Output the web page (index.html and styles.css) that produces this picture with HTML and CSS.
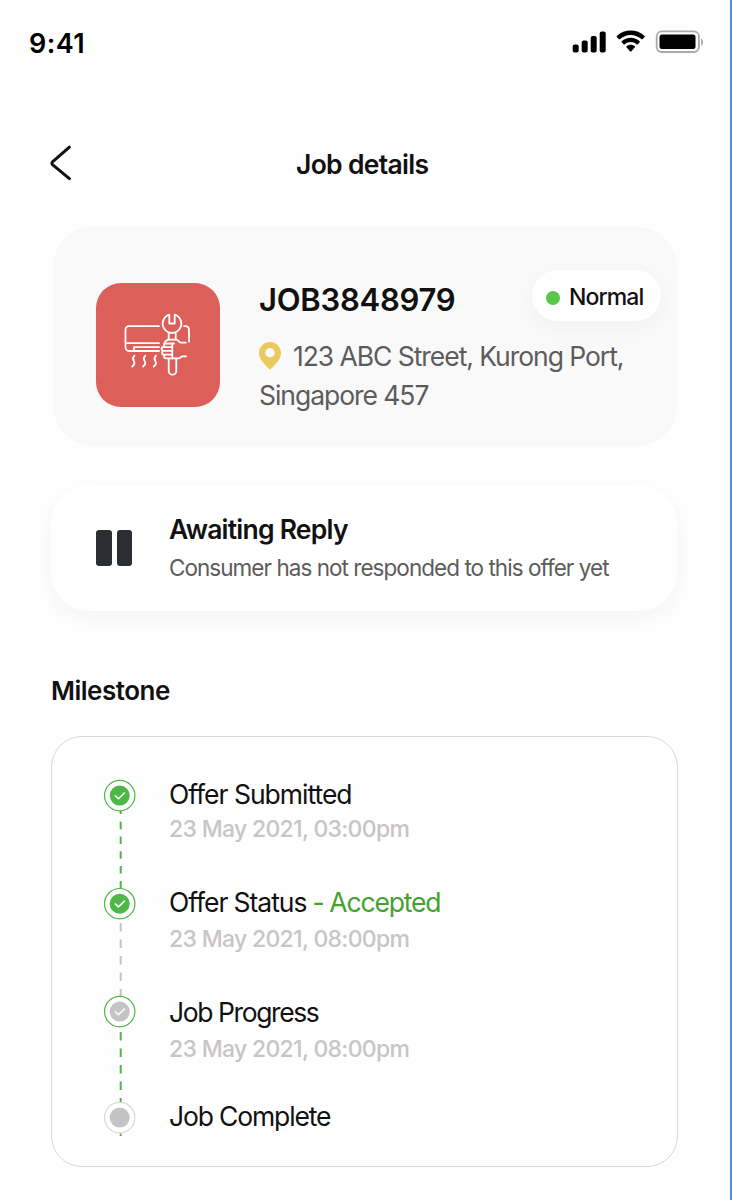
FILE: index.html
```html
<!DOCTYPE html>
<html lang="en">
<head>
<meta charset="utf-8">
<title>Job details</title>
<link rel="stylesheet" href="styles.css">
</head>
<body>
<main class="screen">
  <div class="status-bar">
    <span class="clock">9:41</span>
    <svg class="status-icons" width="134" height="26" viewBox="0.3 0.600 134 26">
      <rect x="1" y="15" width="6" height="8" rx="2"/>
      <rect x="10" y="11" width="6" height="12" rx="2"/>
      <rect x="19" y="6.500" width="6" height="16.500" rx="2"/>
      <rect x="28" y="2" width="6" height="21" rx="2"/>
      <path d="M59 4.700c4.200 0 8 1.600 10.900 4.300.3.200.7.200.9 0l2.100-2.100c.3-.3.300-.7 0-1C65-1.400 53-1.400 45.100 5.900c-.3.300-.3.700 0 1L47.200 9c.2.200.6.200.9 0C51 6.300 54.800 4.700 59 4.700z" transform="translate(0 .8)"/>
      <path d="M59 12.400c2.200 0 4.300.8 6 2.300.3.200.7.200.9 0l2.100-2.100c.3-.3.300-.7 0-1-5-4.700-13-4.700-18 0-.3.300-.3.700 0 1l2.100 2.100c.2.200.6.200.9 0 1.700-1.500 3.800-2.300 6-2.300z" transform="translate(0 .3)"/>
      <path d="M63.200 17.800c.3-.3.300-.7 0-1-2.400-2-6-2-8.400 0-.3.300-.3.700 0 1l3.700 4.400c.3.200.7.200 1 0z"/>
      <rect class="battery-case" x="85" y="1.900" width="42.200" height="20.700" rx="5"/>
      <rect x="87.800" y="5" width="36" height="14.700" rx="2.500"/>
      <path class="battery-cap" d="M129.300 9v7c2.800-1.200 2.800-5.800 0-7z"/>
    </svg>
  </div>

  <header class="header">
    <svg class="back" width="24" height="38" viewBox="0 0 24 38"><path d="M20.400 2.200 3.800 16.500q-1.800 1.700 0 3.400L20.400 33.600"/></svg>
    <h1 class="title">Job details</h1>
  </header>

  <section class="job-card">
    <svg class="job-icon" width="124" height="124" viewBox="0 0 124 124">
      <path d="M63 43.100H33a3.500 3.500 0 0 0-3.500 3.500V64.500a3.500 3.500 0 0 0 3.500 3.500h30M30 60.200h33M63 64.200H38V68M88 43.100h1.500a3.500 3.500 0 0 1 3.500 3.500v12.100"/>
      <path d="M38.500 72.700c-4.500 4 2 5.500-.5 9l-1.800 2M49.300 72.700c-4.500 4 2 5.500-.5 9l-1.800 2M60 72.700c-4.500 4 2 5.500-.5 9l-1.800 2"/>
      <path d="M73.300 31.700v8.800h5.400v-8.800a9.300 9.300 0 1 1-5.400 0zM72.700 49.500v7M79.700 49.500v7M72.700 75.700v12.200a3.800 3.800 0 0 0 7.600 0V75.700"/>
      <path d="M68 61c1-2.500 3-4.300 5.500-4.300h6.800c2.200 0 2.400 3 4.700 3h4.700M76.300 75.400h6c2.500 0 2-2 4.500-2H90M76.300 60.700v14.700"/>
      <path d="M78 60.500H70a1.800 1.800 0 0 0-.5 3.600h6.800M70 64h-2.500a1.900 1.900 0 0 0 0 3.800h8.800M68 67.800a1.900 1.900 0 0 0 0 3.800h8.300M70 71.600a1.900 1.900 0 0 0 0 3.800h6.300"/>
    </svg>
    <div class="job-body">
      <h2 class="job-id">JOB3848979</h2>
      <p class="address"><svg class="pin" width="22" height="28" viewBox="0 0 22 28"><path fill-rule="evenodd" d="M11 0a11 11 0 0 1 11 11c0 6.500-6 12-11 16.700C6 23 0 17.500 0 11A11 11 0 0 1 11 0zm0 6a4.700 4.700 0 1 0 0 9.400A4.700 4.700 0 0 0 11 6z"/></svg><span class="street">123 ABC Street, Kurong Port,</span><br>Singapore 457</p>
    </div>
    <div class="badge"><i class="dot"></i>Normal</div>
  </section>

  <section class="reply-card">
    <div class="pause"><i class="bar"></i><i class="bar"></i></div>
    <div>
      <h2 class="reply-title">Awaiting Reply</h2>
      <p class="reply-text">Consumer has not responded to this offer yet</p>
    </div>
  </section>

  <h2 class="section-title">Milestone</h2>

  <section class="milestones">
    <svg class="rail" width="34" height="372" viewBox="0 -0.5 34 372">
      <g class="link">
        <path class="green" d="M17.700 54.200V129" stroke-dasharray="7.500 7.300"/>
        <path class="green" d="M17.700 43V46.500"/>
        <path class="grey" d="M17.700 155.500V230" stroke-dasharray="8.500 8"/>
        <path class="green" d="M17.700 264.500V336" stroke-dasharray="8.500 8"/>
        <path class="green" d="M17.700 366V368.500"/>
      </g>
      <g class="node done"><circle class="ring" cx="16.700" cy="28.100" r="15.200"/><circle class="core" cx="16.700" cy="28.100" r="10"/><path d="m12.300 28.300 3.100 3 6-5.800"/></g>
      <g class="node done"><circle class="ring" cx="16.700" cy="136.200" r="15.200"/><circle class="core" cx="16.700" cy="136.200" r="10"/><path d="m12.300 136.400 3.100 3 6-5.800"/></g>
      <g class="node active"><circle class="ring" cx="16.700" cy="244.100" r="15.200"/><circle class="core" cx="16.700" cy="244.100" r="10"/><path d="m12.300 244.300 3.100 3 6-5.800"/></g>
      <g class="node pending"><circle class="ring" cx="16.700" cy="350.100" r="15.200"/><circle class="core" cx="16.700" cy="350.100" r="10"/></g>
    </svg>
    <ol class="steps">
      <li class="step first"><h3 class="step-name submitted">Offer Submitted</h3><p class="date">23 May 2021, 03:00pm</p></li>
      <li class="step"><h3 class="step-name status">Offer Status <span class="accepted">- Accepted</span></h3><p class="date">23 May 2021, 08:00pm</p></li>
      <li class="step"><h3 class="step-name progress">Job Progress</h3><p class="date">23 May 2021, 08:00pm</p></li>
      <li class="step"><h3 class="step-name complete">Job Complete</h3></li>
    </ol>
  </section>
</main>
</body>
</html>
```
FILE: styles.css
```css
* { box-sizing: border-box; margin: 0; padding: 0; }
body { background: #fefefe; color: #111; font-family: Inter, "Liberation Sans", sans-serif; overflow: hidden; }
h1, h2, h3, p { font-weight: 400; white-space: nowrap; }
svg { display: block; flex: none; }

.screen { height: 1200px; padding-left: 51px; border-right: 2px solid #4a90e2; }

.status-bar { display: flex; justify-content: space-between; height: 120px; margin-left: -22px; padding: 30px 24px 0 0; }
.clock { font-size: 27px; line-height: 28px; font-weight: 600; letter-spacing: 0.4px; color: #000; }
.status-icons { fill: #000; }
.battery-case { fill: none; stroke: #aaa; stroke-width: 1.8; }
.battery-cap { fill: #aaa; }

.header { display: flex; align-items: center; height: 88px; }
.back { margin-left: -2px; fill: none; stroke: #111; stroke-width: 3; stroke-linecap: round; }
.title { margin-left: 223px; font-size: 26.500px; line-height: 36px; font-weight: 600; letter-spacing: -0.7px; }

.job-card { display: flex; width: 624px; height: 219px; margin: 19px 0 0 2px; padding: 56px 0 0 43px; border-radius: 40px; background: #f9f9f9; position: relative; }
.job-icon { border-radius: 25px; background: #dd5f5a; fill: none; stroke: #fff; stroke-width: 1.8; stroke-linecap: round; stroke-linejoin: round; }
.job-body { margin-left: 39px; }
.job-id { font-size: 31px; line-height: 34px; font-weight: 600; letter-spacing: -0.25px; }
.address { margin-top: 20px; font-size: 26.500px; line-height: 39px; letter-spacing: -1.05px; color: #5c5c5c; }
.pin { display: inline-block; margin: 0 12px 0 0; vertical-align: -4px; fill: #eac95f; }
.badge { position: absolute; top: 43px; right: 16px; display: flex; align-items: center; width: 129px; height: 51px; padding: 3px 0 0 14px; border-radius: 26px; background: #fff; box-shadow: 0 6px 20px rgba(0, 0, 0, 0.03); font-size: 23px; line-height: 30px; font-weight: 500; letter-spacing: -0.9px; }
.dot { width: 14px; height: 14px; margin: 1px 9px 0 0; border-radius: 50%; background: #5bc748; }

.reply-card { display: flex; width: 626px; height: 126px; margin-top: 39px; padding: 29px 0 0 45px; border-radius: 38px; background: #fff; box-shadow: 0 8px 24px rgba(0, 0, 0, 0.04); }
.pause { display: flex; gap: 5px; width: 73px; padding-top: 16px; }
.bar { width: 15.500px; height: 36px; border-radius: 3px; background: #2a2d32; }
.reply-title { font-size: 26.500px; line-height: 30px; font-weight: 600; letter-spacing: -0.77px; }
.reply-text { margin-top: 9px; font-size: 22.500px; line-height: 30px; letter-spacing: -0.96px; color: #5c5c5c; }

.section-title { margin-top: 64px; font-size: 26px; line-height: 32px; font-weight: 600; letter-spacing: -0.5px; }

.milestones { display: flex; width: 627px; height: 431px; margin-top: 29px; padding: 30px 0 0 51px; border: 1px solid #d8d8d8; border-radius: 31px; background: #fefefe; }
.link { fill: none; stroke-width: 2; }
.green { stroke: #4db848; }
.grey { stroke: #c4c4c4; }
.ring { fill: #fff; stroke: #4db848; stroke-width: 1.2; }
.core { fill: #4db848; }
.node path { fill: none; stroke: #fff; stroke-width: 1.5; stroke-linecap: round; stroke-linejoin: round; }
.active .core, .pending .core { fill: #c4c4c4; }
.pending .ring { stroke: #dadada; }

.steps { list-style: none; margin-left: 32px; padding-top: 12px; }
.step { height: 110px; }
.first { height: 108px; }
.step-name { font-size: 26.500px; line-height: 30px; }
.submitted { letter-spacing: -1px; }
.status { letter-spacing: -1px; word-spacing: -0.5px; }
.progress { letter-spacing: -1.4px; }
.complete { letter-spacing: -1.15px; }
.accepted { color: #43a22f; letter-spacing: -1.15px; }
.date { margin-top: 7px; font-size: 23px; line-height: 30px; font-weight: 500; letter-spacing: -0.69px; color: #c8c5c5; }
.first .date { margin-top: 5px; }
.step:last-child { margin-top: -6px; }
```
